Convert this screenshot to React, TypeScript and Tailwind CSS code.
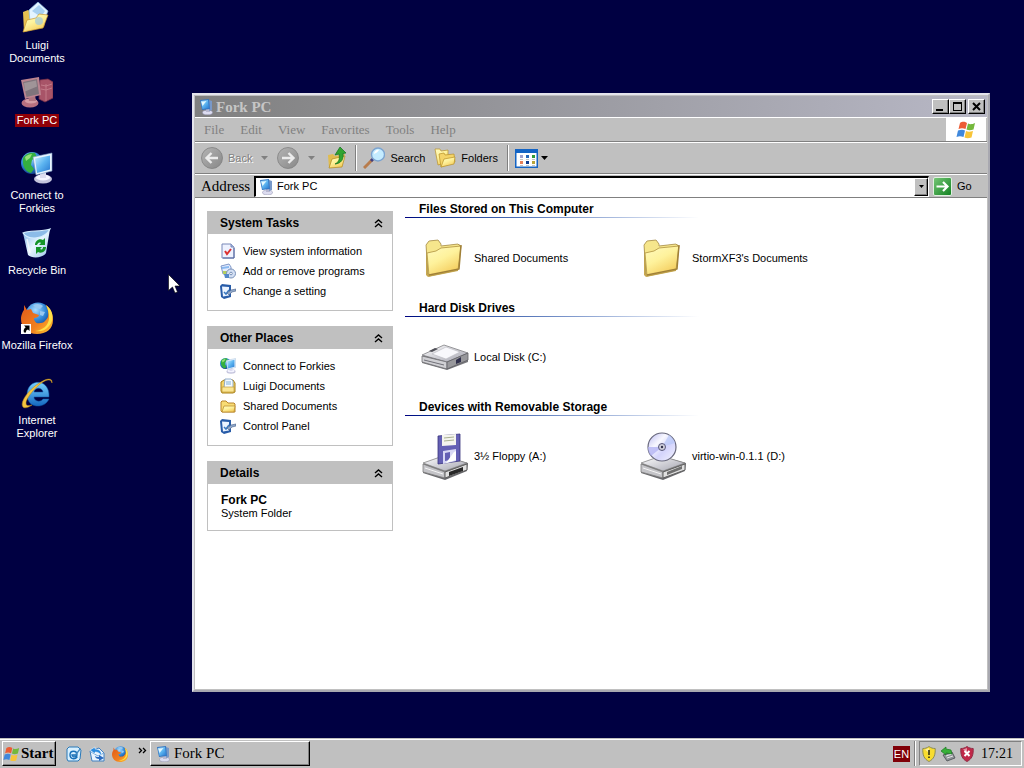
import type { ReactNode } from "react";

type IconProps = { className?: string };

function Defs() {
  return (
    <svg className="absolute h-0 w-0" aria-hidden="true">
      <defs>
        <linearGradient id="folder" x1="0" y1="0" x2="0.6" y2="1">
          <stop offset="0" stopColor="#fffac0" />
          <stop offset="0.5" stopColor="#fef29c" />
          <stop offset="1" stopColor="#f4cc5c" />
        </linearGradient>
        <linearGradient id="screen" x1="0" y1="0" x2="1" y2="1">
          <stop offset="0" stopColor="#c8f0ff" />
          <stop offset="0.5" stopColor="#5cb4f0" />
          <stop offset="1" stopColor="#2878d0" />
        </linearGradient>
        <linearGradient id="metal" x1="0" y1="0" x2="1" y2="1">
          <stop offset="0" stopColor="#ffffff" />
          <stop offset="1" stopColor="#a4a4b0" />
        </linearGradient>
        <radialGradient id="globe" cx="0.4" cy="0.3" r="0.8">
          <stop offset="0" stopColor="#a8dcff" />
          <stop offset="0.5" stopColor="#3088d8" />
          <stop offset="1" stopColor="#08307c" />
        </radialGradient>
        <linearGradient id="fox" x1="0" y1="0" x2="1" y2="1">
          <stop offset="0" stopColor="#e05818" />
          <stop offset="0.6" stopColor="#f08020" />
          <stop offset="1" stopColor="#ffc830" />
        </linearGradient>
        <linearGradient id="bin" x1="0" y1="0" x2="1" y2="1">
          <stop offset="0" stopColor="#7cb4e8" />
          <stop offset="0.5" stopColor="#e8f6ff" />
          <stop offset="1" stopColor="#98c4e8" />
        </linearGradient>
        <linearGradient id="ie" x1="0" y1="0" x2="0" y2="1">
          <stop offset="0" stopColor="#78d0ff" />
          <stop offset="1" stopColor="#1468c0" />
        </linearGradient>
        <linearGradient id="go" x1="0" y1="0" x2="1" y2="1">
          <stop offset="0" stopColor="#78c878" />
          <stop offset="1" stopColor="#108020" />
        </linearGradient>
        <linearGradient id="nav" x1="0" y1="0" x2="1" y2="1">
          <stop offset="0" stopColor="#b4b4b4" />
          <stop offset="1" stopColor="#888888" />
        </linearGradient>
        <linearGradient id="disc" x1="0" y1="0" x2="1" y2="1">
          <stop offset="0" stopColor="#b8b8f0" />
          <stop offset="0.35" stopColor="#f8f8ff" />
          <stop offset="0.6" stopColor="#d4d4fc" />
          <stop offset="1" stopColor="#f4f4ff" />
        </linearGradient>
      </defs>
    </svg>
  );
}

function OpenFolderIcon({ className }: IconProps) {
  return (
    <svg viewBox="0 0 32 32" className={className}>
      <path d="M2 10l5-2 3 2 16-1-3 16-20 5z" fill="#e8c050" />
      <path d="M8 8l9-8 10 9-4 10-14 1z" fill="#e4f4ff" stroke="#88b8e0" strokeWidth="0.7" />
      <path d="M11 9l7-6 6 6-4 6z" fill="#a8d0f0" />
      <path d="M2 30L6 18l9-2 3-4 9 1-5 13z" fill="url(#folder)" stroke="#c89830" strokeWidth="0.7" />
      <circle cx="18" cy="19" r="4" fill="#9cc8e0" opacity="0.7" />
    </svg>
  );
}

function SelectedComputerIcon({ className }: IconProps) {
  return (
    <svg viewBox="0 0 32 32" className={className}>
      <path d="M19 3l8-1 5 3v16l-8 4-6-3z" fill="#a85468" stroke="#7c3048" strokeWidth="0.7" />
      <path d="M25 7v17M20 8l5 1 6-2M20 12l5 1 6-2" stroke="#c88490" strokeWidth="0.8" fill="none" />
      <ellipse cx="9" cy="26" rx="8.5" ry="4.5" fill="#b87080" />
      <ellipse cx="10" cy="24" rx="6" ry="2.5" fill="#d49ca4" />
      <path d="M7 18h7l1 6H8z" fill="#b07480" />
      <path d="M0 3l18-3 2 18-16 4z" fill="#bc8490" />
      <path d="M2 5l14-3 2 15-12.500 3z" fill="#80747c" />
      <path d="M3 6l12-2.500 1 6-12 5z" fill="#a09498" />
    </svg>
  );
}

function NetworkIcon({ className }: IconProps) {
  return (
    <svg viewBox="0 0 32 32" className={className}>
      <circle cx="11" cy="11" r="11" fill="url(#globe)" />
      <path d="M2 6c3-5 8-6 12-5l2 4-5 3-1 5 3 4-3 4C5 20 1 15 2 6z" fill="#34b040" />
      <path d="M4 5c2-2 5-3 7-3l-2 4-4 3z" fill="#98e078" />
      <ellipse cx="22" cy="27" rx="9" ry="4.500" fill="#c4c4dc" />
      <ellipse cx="22" cy="25.500" rx="7" ry="3" fill="#f4f4ff" />
      <path d="M19 20h6v6h-6z" fill="#dcdcf0" />
      <path d="M12 5l19-4v18l-16 4z" fill="#e8f4ff" stroke="#7898c0" strokeWidth="0.6" />
      <path d="M14 6.500l15-3v14l-13 3.500z" fill="url(#screen)" />
    </svg>
  );
}

function RecycleBinIcon({ className }: IconProps) {
  return (
    <svg viewBox="0 0 32 32" className={className}>
      <path d="M2 6c6 4 17 3 27-4l-4 24c-3 5-14 6-18 2z" fill="url(#bin)" />
      <path d="M2 6c6-3 17-1 27-4-5 10-21 12-27 4z" fill="#8cbce8" stroke="#d8f0ff" strokeWidth="1.200" />
      <path d="M6 12l3 14" stroke="#fff" strokeWidth="1.500" opacity="0.7" />
      <path d="M14 18c0-4 4-7 8-5l2-2v7h-6l2-2c-2-1-3 0-4 2z" fill="#149428" />
      <path d="M25 20c0 4-4 7-8 5l-2 2v-7h6l-2 2c2 1 3 0 3-2z" fill="#149428" />
    </svg>
  );
}

function FirefoxIcon({ className }: IconProps) {
  return (
    <svg viewBox="0 0 32 32" className={className}>
      <circle cx="17" cy="13" r="12.500" fill="url(#globe)" />
      <path d="M12 3c4-2 8-1 10 1l-3 3-4-1zM19 9l5 1-2 4-3-1z" fill="#98c8f0" />
      <path
        d="M3 3l3 5 4-1 2 4 6 2c0 2-3 3-5 3 0 4 3 6 6 5 3 0 5-1 8-6 1-4 0-8-2-12 5 4 7 9 7 15 0 9-7 14-16 14C7 32 0 26 0 17c0-4 2-8 3-9z"
        fill="url(#fox)"
      />
      <path d="M25 3c7 5 9 14 3 21-4 5-9 6-14 5 9-1 13-6 14-12 0-6-1-10-3-14z" fill="#ffe048" />
    </svg>
  );
}

function ShortcutArrow({ className }: IconProps) {
  return (
    <svg viewBox="0 0 10 10" className={className}>
      <path d="M0 0h10v10H0z" fill="#fff" />
      <path d="M3 1.500h5.500V7L7 5.500C5 6 5 7 5 8.500H3C2 6.500 3 4.500 4.700 3.200z" fill="#000" />
    </svg>
  );
}

function ExplorerIcon({ className }: IconProps) {
  return (
    <svg viewBox="0 0 32 32" className={className}>
      <path
        d="M28 20H13c0 4 6 6 9 2h6c-3 7-12 9-18 5-6-5-5-16 1-20 8-5 18 1 17 13zM13 15h9c-1-5-8-5-9 0z"
        fill="url(#ie)"
        fillRule="evenodd"
        stroke="#0c50a0"
        strokeWidth="0.500"
      />
      <path
        d="M31 6c1-5-5-5-11-1C9 11-2 25 2 30c2 2 6 0 9-2-4 1-6 1-6-2C5 20 21 2 28 3c2 0 2 1 3 3z"
        fill="#f4c440"
        stroke="#b88418"
        strokeWidth="0.500"
      />
    </svg>
  );
}

function ComputerIcon({ className }: IconProps) {
  return (
    <svg viewBox="0 0 16 16" className={className}>
      <ellipse cx="9.500" cy="13.500" rx="5" ry="2.300" fill="#dcdcf0" stroke="#8c8ca8" strokeWidth="0.500" />
      <path d="M8 9h4v4H8z" fill="#b8b8d0" />
      <path d="M11 1l3 1v9l-3 1z" fill="#7898c8" />
      <path d="M2 1l9-1 1 10-8 1z" fill="#3478c4" />
      <path d="M3 2l7-1 1 8-6.500 1z" fill="url(#screen)" />
      <path d="M3.500 3l5-1-4 5z" fill="#e4f8ff" />
    </svg>
  );
}

function WindowsFlag({ className }: IconProps) {
  return (
    <svg viewBox="0 0 20 18" className={className}>
      <path d="M4 2c3-2 5-1 7 0L9.500 8C7 7 5 7 2.500 8z" fill="#ec5c34" />
      <path d="M12 2.500c2 1 4 1 7-.5L17.500 8.500c-3 1-5 1-7 0z" fill="#74b83c" />
      <path d="M2 9.500c3-1 5-1 7 0l-1.500 6.500C5 15 3 15 .5 16z" fill="#4088dc" />
      <path d="M10 10c2 1 4 1 7 0l-1.500 6.500c-3 1-5 1-7 0z" fill="#f8c438" />
    </svg>
  );
}

function NavIcon({ forward }: { forward?: boolean }) {
  return (
    <svg viewBox="0 0 22 22" className="size-[22px]">
      <circle cx="11" cy="11" r="10.500" fill="url(#nav)" stroke="#808080" strokeWidth="0.800" />
      <path
        d={forward ? "M5 11h11M11.500 6l5 5-5 5" : "M17 11H6M10.500 6l-5 5 5 5"}
        fill="none"
        stroke="#ececec"
        strokeWidth="2.400"
      />
    </svg>
  );
}

function UpFolderIcon() {
  return (
    <svg viewBox="0 0 20 22" className="h-[22px] w-5">
      <path d="M1 8l5-1 2 2 10-2-3 12-13 2z" fill="#e0bc50" />
      <path d="M2 21l3-9 13-3-3 11z" fill="url(#folder)" stroke="#b08820" strokeWidth="0.700" />
      <path d="M8 17c4-2 5-5 4-10l-4 1 5-8 6 6-3 .5c1 6-2 10-8 10.500z" fill="#30a430" stroke="#107018" strokeWidth="0.700" />
    </svg>
  );
}

function SearchIcon() {
  return (
    <svg viewBox="0 0 22 22" className="size-[22px]">
      <path d="M9 13l-8 8" stroke="#b87c4c" strokeWidth="3" />
      <path d="M10 12l-2 2" stroke="#404080" strokeWidth="3" />
      <circle cx="15" cy="7.500" r="6.500" fill="#c4ecff" stroke="#7ca4d0" strokeWidth="1.400" />
      <path d="M11 7c0-3 3-5 5-4-1 2-3 3-5 4z" fill="#fff" />
    </svg>
  );
}

function FoldersIcon() {
  return (
    <svg viewBox="0 0 22 20" className="h-5 w-[22px]">
      <path d="M1 1h5l1 2 7-1v12L4 17z" fill="url(#folder)" stroke="#b89028" strokeWidth="0.700" />
      <path d="M5 6l5-1 1 2 9-1 1 8-14 5z" fill="#f4d468" stroke="#b89028" strokeWidth="0.700" />
      <path d="M7 19l3-8 11-2-1 7z" fill="url(#folder)" stroke="#b89028" strokeWidth="0.700" />
    </svg>
  );
}

function ViewsIcon() {
  return (
    <svg viewBox="0 0 23 19" className="h-[19px] w-[23px]">
      <path d="M0 0h23v19H0z" fill="#1464c4" />
      <path d="M1.500 4h20v13.500h-20z" fill="#fff" />
      <path d="M5 6h3v3H5z" fill="#a0a0cc" />
      <path d="M11 6h3v3h-3z" fill="#2868b8" />
      <path d="M17 6h3v3h-3z" fill="#309c38" />
      <path d="M5 12h3v3H5z" fill="#e88058" />
      <path d="M11 12h3v3h-3z" fill="#103c90" />
      <path d="M17 12h3v3h-3z" fill="#b8a438" />
      <path d="M5 10h3v1H5zM11 10h3v1h-3zM17 10h3v1h-3zM5 16h3v1H5zM11 16h3v1h-3zM17 16h3v1h-3z" fill="#c4c4c4" />
    </svg>
  );
}

function GoIcon() {
  return (
    <svg viewBox="0 0 19 19" className="size-[19px]">
      <rect x="0.500" y="0.500" width="18" height="18" rx="1.500" fill="url(#go)" stroke="#e0f0e0" />
      <path d="M3.500 9.500h11M10 5l4.500 4.500L10 14" fill="none" stroke="#fff" strokeWidth="2.200" />
    </svg>
  );
}

function Caret({ className }: IconProps) {
  return (
    <svg viewBox="0 0 7 4" className={className}>
      <path d="M0 0h7L3.500 4z" fill="currentColor" />
    </svg>
  );
}

function InfoPageIcon() {
  return (
    <svg viewBox="0 0 16 16" className="size-4">
      <path d="M2 1h9l3 3v11H2z" fill="#eef2ff" stroke="#7888b8" />
      <path d="M11 1v3h3" fill="#a8b8e0" stroke="#7888b8" />
      <path d="M14 5v10H3" fill="none" stroke="#5468a0" />
      <path d="M5 8l2 3 4-5" fill="none" stroke="#dc3030" strokeWidth="2" />
    </svg>
  );
}

function ProgramsIcon() {
  return (
    <svg viewBox="0 0 16 16" className="size-4">
      <path d="M1 3l8-2 2 3v7H3z" fill="#e4ecff" stroke="#8098c8" />
      <path d="M2 4l7-1v2l-7 1z" fill="#88b8f0" />
      <path d="M3 8h4v3H3z" fill="#b4d060" />
      <circle cx="11" cy="10.500" r="4.500" fill="#d4e0f4" stroke="#7890b8" />
      <circle cx="11" cy="10.500" r="1.300" fill="#fff" stroke="#7890b8" />
      <path d="M4 11h5v4H5z" fill="#5488c8" />
    </svg>
  );
}

function SettingIcon() {
  return (
    <svg viewBox="0 0 16 16" className="size-4">
      <path d="M0 3l2-2 9 1v12l-7 2-3-2z" fill="#285ca8" />
      <path d="M2 3.500L9 4v8.500l-6 1z" fill="#ecf4ff" />
      <path d="M4 9l2 2 3-4" fill="none" stroke="#3878c0" strokeWidth="1.500" />
      <path d="M7 10l4-3 5-1v2l-4 1-3 3z" fill="#90a8c8" stroke="#48608c" strokeWidth="0.600" />
    </svg>
  );
}

function DocumentsIcon() {
  return (
    <svg viewBox="0 0 16 16" className="size-4">
      <path d="M1 4l3-2h9l2 3v9l-2 1H2l-1-2z" fill="#f4d468" stroke="#a8801c" />
      <path d="M5 1h6l2 2v7H4z" fill="#f4faff" stroke="#7c9cc0" strokeWidth="0.800" />
      <path d="M6 4h5M6 6h5" stroke="#80b0d8" />
      <path d="M2 9h12v5H2z" fill="#fbe694" stroke="#b89028" strokeWidth="0.600" />
    </svg>
  );
}

function SmallFolderIcon() {
  return (
    <svg viewBox="0 0 16 16" className="size-4">
      <path d="M1 4l1-1h4l2 2h6l1 1v8H2l-1-1z" fill="#f8dc74" stroke="#b8842c" />
      <path d="M2 14l2-6h11l-1 6z" fill="url(#folder)" stroke="#b88828" strokeWidth="0.700" />
    </svg>
  );
}

function BigFolderIcon() {
  return (
    <svg viewBox="0 0 48 48" className="size-12">
      <path d="M5 11l3-4 9-1 3 4v2l18-2 2 2-3 25-30 6-2-2z" fill="#c8a850" />
      <path d="M5 11l3-4 9-1 3 4v2l17-2 2 2-2 23-30 5z" fill="#f6e68c" stroke="#a89050" strokeWidth="0.800" />
      <path d="M6 19l9-2 5-3 20-2-3 24-29 6z" fill="url(#folder)" stroke="#b89c48" strokeWidth="0.900" />
      <path d="M8 41l30-6 2-24" fill="none" stroke="#a08038" strokeWidth="1.500" />
    </svg>
  );
}

function DriveBase() {
  return (
    <>
      <path d="M2 32l20-8 25 7-1 8-22 9-22-7z" fill="#68686c" />
      <path d="M2 31l20-7 24 7-22 8z" fill="url(#metal)" stroke="#888" strokeWidth="0.800" />
      <path d="M2 32l22 8v6L2 40z" fill="#c4c4c8" stroke="#808080" strokeWidth="0.800" />
      <path d="M24 40l22-8v6l-22 8z" fill="#e0e0e0" stroke="#606060" />
      <path d="M4 36l18 6" stroke="#f4f4f4" />
    </>
  );
}

function HardDiskIcon() {
  return (
    <svg viewBox="0 0 48 48" className="size-12">
      <path d="M1 23l22-10 24 8v8L26 37 1 30z" fill="#78787c" />
      <path d="M1 22l22-10 24 8-21 9z" fill="url(#metal)" stroke="#808084" strokeWidth="0.800" />
      <path d="M1 23l25 6v7L1 29z" fill="#d0d0d4" stroke="#707074" strokeWidth="0.800" />
      <path d="M26 29l21-9v7l-21 9z" fill="#98989c" stroke="#606064" strokeWidth="0.800" />
      <path d="M11 21l14-7 14 5-14 7z" fill="#f8f8fc" stroke="#b8b8c0" strokeWidth="0.600" />
      <path d="M8 18l6-3 3 1-6 3z" fill="#505058" />
      <path d="M35 27l5-3v5l-5 2z" fill="#30304c" />
      <path d="M3 27l20 5" stroke="#707078" />
    </svg>
  );
}

function FloppyDriveIcon() {
  return (
    <svg viewBox="0 0 48 48" className="size-12">
      <DriveBase />
      <path d="M28 40l14-5v4l-14 5z" fill="#282828" />
      <path d="M17 4l22-2v27l-22 3z" fill="#6460b4" stroke="#38347c" strokeWidth="0.800" />
      <path d="M21 3l14-1v11l-14 1z" fill="#f4f4ee" />
      <path d="M23 6l10-1M23 9l10-1" stroke="#a8b090" />
      <path d="M22 19l13-2v12l-13 3z" fill="#d8d8f4" />
      <path d="M24 21l5-1v8l-5 1z" fill="#6460b4" />
      <path d="M25 31l8-11 2-1v9z" fill="#fff" />
    </svg>
  );
}

function DiscDriveIcon() {
  return (
    <svg viewBox="0 0 48 48" className="size-12">
      <DriveBase />
      <path d="M28 40l15-6v3l-15 6z" fill="#707070" />
      <circle cx="23" cy="15" r="14" fill="url(#disc)" stroke="#68687c" strokeWidth="1.200" />
      <path d="M23 15L12 24a14 14 0 0 1-3-9z" fill="#b4b4f4" opacity="0.8" />
      <path d="M23 15L30 3a14 14 0 0 1 6 8z" fill="#b8c8f8" opacity="0.7" />
      <circle cx="23" cy="15" r="3.500" fill="#d0d0dc" stroke="#58587c" />
      <circle cx="23" cy="15" r="1.200" fill="#303048" />
    </svg>
  );
}

function ShowDesktopIcon() {
  return (
    <svg viewBox="0 0 16 16" className="size-4">
      <path d="M1 3l2-2h9l3 3-1 9-2 2H2l-1-2z" fill="#d8f0ff" stroke="#2878b8" />
      <path d="M11 9H6c0 2 3 2 4 1l1 1c-2 3-7 2-7-2 0-5 7-5 7 0z" fill="none" stroke="#1870b8" strokeWidth="1.400" />
      <path d="M7 11l7-9 1 1-7 9z" fill="#4088c0" />
    </svg>
  );
}

function MailIcon() {
  return (
    <svg viewBox="0 0 16 16" className="size-4">
      <path d="M1 5l9-3 5 5v8H3z" fill="#e8f4ff" stroke="#4080c0" />
      <path d="M2 6l7 4 6-3" fill="none" stroke="#78a8d8" />
      <path d="M1 4l5-3v2c5 0 7 3 6 7-1-3-3-4-6-4v2z" fill="#2c8ce0" stroke="#fff" strokeWidth="0.500" />
      <path d="M15 12l-5 3v-2c-2 0-4-1-4-3 1 1 3 1 4 1V9z" fill="#2c6cc0" />
    </svg>
  );
}

function ShieldIcon({ alert }: { alert?: boolean }) {
  return (
    <svg viewBox="0 0 14 16" className="h-4 w-[14px]">
      <path
        d="M7 .5C5 2 3 2.500.8 2.500.5 9 2 13 7 15.500 12 13 13.500 9 13.200 2.500 11 2.500 9 2 7 .5z"
        fill={alert ? "#c02848" : "#f8dc30"}
        stroke={alert ? "#903048" : "#8c8c58"}
      />
      <path d="M3 3.500L7 2v5z" fill="#fff" opacity="0.5" />
      {alert ? (
        <path d="M4.500 5l5 5M9.500 5l-5 5" stroke="#fff" strokeWidth="2" />
      ) : (
        <path d="M7 4v5M7 10.500v1.500" stroke="#303010" strokeWidth="1.600" />
      )}
    </svg>
  );
}

function SafelyRemoveIcon() {
  return (
    <svg viewBox="0 0 16 16" className="size-4">
      <path d="M3 9l9-3 3 6-8 3z" fill="#909498" stroke="#484c50" strokeWidth="0.800" />
      <path d="M6 10l6-2M7 12l6-2" stroke="#e4e4e4" />
      <path d="M1 5l5-4v2l5 1 1 4-6-1v2z" fill="#38b038" stroke="#187820" strokeWidth="0.700" />
    </svg>
  );
}

const DESKTOP_ICONS = [
  { label: "Luigi Documents", Icon: OpenFolderIcon },
  { label: "Fork PC", Icon: SelectedComputerIcon, selected: true },
  { label: "Connect to Forkies", Icon: NetworkIcon },
  { label: "Recycle Bin", Icon: RecycleBinIcon },
  { label: "Mozilla Firefox", Icon: FirefoxIcon, shortcut: true },
  { label: "Internet Explorer", Icon: ExplorerIcon },
];

const MENUS = ["File", "Edit", "View", "Favorites", "Tools", "Help"];

const SYSTEM_TASKS = [
  { label: "View system information", icon: <InfoPageIcon /> },
  { label: "Add or remove programs", icon: <ProgramsIcon /> },
  { label: "Change a setting", icon: <SettingIcon /> },
];

const OTHER_PLACES = [
  { label: "Connect to Forkies", icon: <NetworkIcon className="size-4" /> },
  { label: "Luigi Documents", icon: <DocumentsIcon /> },
  { label: "Shared Documents", icon: <SmallFolderIcon /> },
  { label: "Control Panel", icon: <SettingIcon /> },
];

const GROUPS = [
  {
    title: "Files Stored on This Computer",
    items: [
      { label: "Shared Documents", icon: <BigFolderIcon /> },
      { label: "StormXF3's Documents", icon: <BigFolderIcon /> },
    ],
  },
  {
    title: "Hard Disk Drives",
    items: [{ label: "Local Disk (C:)", icon: <HardDiskIcon /> }],
  },
  {
    title: "Devices with Removable Storage",
    items: [
      { label: "3½ Floppy (A:)", icon: <FloppyDriveIcon /> },
      { label: "virtio-win-0.1.1 (D:)", icon: <DiscDriveIcon /> },
    ],
  },
];

const SERIF = "font-['Liberation_Serif',serif]";
const RAISED =
  "border border-t-white border-l-white border-r-black border-b-black bg-[#c0c0c0] shadow-[inset_-1px_-1px_0_#808080]";
const BAR = "flex items-center border-t border-b border-t-white border-b-[#808080]";

function DesktopIcons() {
  return (
    <nav className="flex w-[74px] shrink-0 flex-col">
      {DESKTOP_ICONS.map(({ label, Icon, selected, shortcut }) => (
        <button
          key={label}
          className="flex h-[75px] flex-col items-center gap-[5px] pt-[2px] leading-[13px] text-white"
        >
          <span className="relative">
            <Icon className="size-8" />
            {shortcut && (
              <ShortcutArrow className="absolute bottom-0 left-0 size-[10px]" />
            )}
          </span>
          <span className={selected ? "bg-[#900008] px-[2px]" : ""}>
            {label}
          </span>
        </button>
      ))}
    </nav>
  );
}

function TitleBar() {
  return (
    <header className="flex h-[21px] items-center gap-[2px] bg-linear-to-r from-[#808080] to-[#b8b8c6] pr-[2px] pl-[3px]">
      <ComputerIcon className="size-4" />
      <h1
        className={`${SERIF} flex-1 text-[15px] leading-5 font-bold text-[#c6c6c6]`}
      >
        Fork PC
      </h1>
      <div className="flex">
        <button aria-label="Minimize" className={`${RAISED} h-[15px] w-[17px]`}>
          <svg viewBox="0 0 15 13" className="h-[13px] w-[15px]">
            <path d="M3 9h7v2H3z" />
          </svg>
        </button>
        <button aria-label="Maximize" className={`${RAISED} h-[15px] w-[17px]`}>
          <svg viewBox="0 0 15 13" className="h-[13px] w-[15px]">
            <path d="M3 2h9v9H3zM4 4v6h7V4z" fillRule="evenodd" />
          </svg>
        </button>
      </div>
      <button aria-label="Close" className={`${RAISED} h-[15px] w-[17px]`}>
        <svg viewBox="0 0 15 13" className="h-[13px] w-[15px]">
          <path d="M4 3l7 7M11 3l-7 7" stroke="#000" strokeWidth="2" />
        </svg>
      </button>
    </header>
  );
}

function MenuBar() {
  return (
    <div className={`${BAR} h-[25px] pr-[1px]`}>
      <div
        className={`${SERIF} flex flex-1 gap-4 pl-[9px] text-[13px] text-[#808080]`}
      >
        {MENUS.map((menu) => (
          <button key={menu}>{menu}</button>
        ))}
      </div>
      <div className="flex h-full w-10 items-center justify-center bg-white">
        <WindowsFlag className="h-[18px] w-5" />
      </div>
    </div>
  );
}

function Separator() {
  return (
    <div className="h-[26px] w-[2px] border-r border-l border-r-white border-l-[#808080]" />
  );
}

function Toolbar() {
  return (
    <div className={`${BAR} h-8 pl-[6px]`}>
      <button className="flex items-center gap-[5px] text-[#808080]">
        <NavIcon />
        <span className="[text-shadow:1px_1px_0_#fff]">Back</span>
      </button>
      <Caret className="ml-[9px] h-1 w-[7px] text-[#808080]" />
      <button aria-label="Forward" className="ml-[9px]">
        <NavIcon forward />
      </button>
      <Caret className="ml-[9px] h-1 w-[7px] text-[#808080]" />
      <button aria-label="Up" className="mr-2 ml-3">
        <UpFolderIcon />
      </button>
      <Separator />
      <button className="ml-[6px] flex items-center gap-[5px]">
        <SearchIcon />
        Search
      </button>
      <button className="mr-[9px] ml-[9px] flex items-center gap-[5px]">
        <FoldersIcon />
        Folders
      </button>
      <Separator />
      <button aria-label="Views" className="ml-[6px] flex items-center gap-[3px]">
        <ViewsIcon />
        <Caret className="h-1 w-[7px]" />
      </button>
    </div>
  );
}

function AddressBar() {
  return (
    <div className={`${BAR} h-6 pl-[6px]`}>
      <label
        htmlFor="address"
        className={`${SERIF} w-[53px] text-[15px] leading-5`}
      >
        Address
      </label>
      <div className="flex h-[21px] flex-1 items-center border-t-2 border-r border-b border-l-2 border-t-black border-r-white border-b-white border-l-black bg-white pl-[2px]">
        <ComputerIcon className="size-4" />
        <input
          id="address"
          defaultValue="Fork PC"
          className="min-w-0 flex-1 pl-[3px] outline-none"
        />
        <button
          aria-label="Show addresses"
          className={`${RAISED} flex h-full w-[14px] items-center justify-center`}
        >
          <Caret className="h-[3px] w-[5px]" />
        </button>
      </div>
      <button className="ml-1 flex w-[54px] items-center gap-[5px]">
        <GoIcon />
        Go
      </button>
    </div>
  );
}

function Panel({ title, children }: { title: string; children: ReactNode }) {
  return (
    <section className="border border-[#c0c0c0]">
      <h2 className="flex h-[22px] items-center justify-between bg-[#c0c0c0] pr-[9px] pl-3 text-[12px] font-bold">
        {title}
        <button aria-label={`Collapse ${title}`}>
          <svg viewBox="0 0 9 9" className="size-[9px]">
            <path
              d="M1 4l3.500-3L8 4M1 8l3.500-3L8 8"
              fill="none"
              stroke="#000"
              strokeWidth="1.400"
            />
          </svg>
        </button>
      </h2>
      {children}
    </section>
  );
}

function LinkList({ items }: { items: { label: string; icon: ReactNode }[] }) {
  return (
    <ul className="pt-[7px] pb-[9px] pl-3">
      {items.map(({ label, icon }) => (
        <li key={label}>
          <a href="#" className="flex h-5 items-center gap-[7px]">
            {icon}
            {label}
          </a>
        </li>
      ))}
    </ul>
  );
}

function ExplorerWindow() {
  return (
    <main className="mt-[93px] mr-[34px] mb-[46px] ml-[118px] flex min-w-0 flex-1 flex-col border-2 border-t-[#e4e4ec] border-r-[#a8a8b0] border-b-[#a8a8b0] border-l-[#e4e4ec] bg-[#c0c0c0] p-[1px]">
      <TitleBar />
      <MenuBar />
      <Toolbar />
      <AddressBar />
      <div className="flex flex-1 bg-white">
        <aside className="flex w-[198px] shrink-0 flex-col gap-[15px] pt-[13px] pl-3">
          <Panel title="System Tasks">
            <LinkList items={SYSTEM_TASKS} />
          </Panel>
          <Panel title="Other Places">
            <LinkList items={OTHER_PLACES} />
          </Panel>
          <Panel title="Details">
            <div className="py-[10px] pl-[13px] leading-[13px]">
              <p className="text-[12px] font-bold">Fork PC</p>
              <p>System Folder</p>
            </div>
          </Panel>
        </aside>
        <div className="flex-1 pt-1 pl-3">
          {GROUPS.map(({ title, items }) => (
            <section key={title} className="pb-[19px]">
              <h2 className="pl-[14px] text-[12px] leading-[15px] font-bold">
                {title}
              </h2>
              <div className="h-px max-w-[294px] bg-linear-to-r from-[#000080] to-white" />
              <ul className="grid grid-cols-[repeat(auto-fill,218px)] pt-4 pl-4">
                {items.map(({ label, icon }) => (
                  <li key={label} className="flex items-center gap-[5px]">
                    {icon}
                    {label}
                  </li>
                ))}
              </ul>
            </section>
          ))}
        </div>
      </div>
    </main>
  );
}

function Taskbar() {
  return (
    <footer
      className={`${SERIF} flex h-[30px] items-center border-t border-[#c0c0c0] bg-[#c0c0c0] px-[2px] text-[15px] shadow-[inset_0_1px_0_#fff]`}
    >
      <button
        className={`${RAISED} flex h-[25px] w-[54px] items-center gap-[1px] font-bold`}
      >
        <WindowsFlag className="h-4 w-[17px]" />
        Start
      </button>
      <div className="ml-[10px] flex gap-[7px]">
        <button aria-label="Show Desktop">
          <ShowDesktopIcon />
        </button>
        <button aria-label="Mail">
          <MailIcon />
        </button>
        <button aria-label="Firefox">
          <FirefoxIcon className="size-4" />
        </button>
      </div>
      <button aria-label="More" className="ml-[10px] self-start pt-2">
        <svg viewBox="0 0 9 7" className="h-[7px] w-[9px]">
          <path d="M1 1l2.500 2.500L1 6M5 1l2.500 2.500L5 6" fill="none" stroke="#000" strokeWidth="1.300" />
        </svg>
      </button>
      <button
        className={`${RAISED} ml-[3px] flex h-[25px] w-40 items-center gap-[3px] pl-1`}
      >
        <ComputerIcon className="size-4" />
        Fork PC
      </button>
      <div className="ml-auto flex items-center">
        <span className="mr-1 bg-[#800008] px-[1px] font-['Liberation_Sans',Arial,sans-serif] text-[11px] leading-4 text-white">
          EN
        </span>
        <div className="mr-[3px] h-[25px] w-[2px] border-r border-l border-r-white border-l-[#808080]" />
        <div className="flex h-[25px] items-center gap-1 border border-t-[#808080] border-r-white border-b-white border-l-[#808080] pr-2 pl-[2px]">
          <ShieldIcon />
          <SafelyRemoveIcon />
          <ShieldIcon alert />
          <time className="pl-[3px] text-[14px]">17:21</time>
        </div>
      </div>
    </footer>
  );
}

export default function App() {
  return (
    <div className="relative flex min-h-screen flex-col bg-[#000042] font-['Liberation_Sans',Arial,sans-serif] text-[11px] text-black">
      <Defs />
      <div className="flex flex-1">
        <DesktopIcons />
        <ExplorerWindow />
      </div>
      <Taskbar />
      <svg
        viewBox="0 0 12 20"
        className="absolute top-[274px] left-[168px] h-5 w-3"
        aria-hidden="true"
      >
        <path
          d="M.5.5v16l4-3.500 2.500 6 2.500-1-2.500-6H12z"
          fill="#fff"
          stroke="#000"
          strokeWidth="0.600"
        />
      </svg>
    </div>
  );
}
